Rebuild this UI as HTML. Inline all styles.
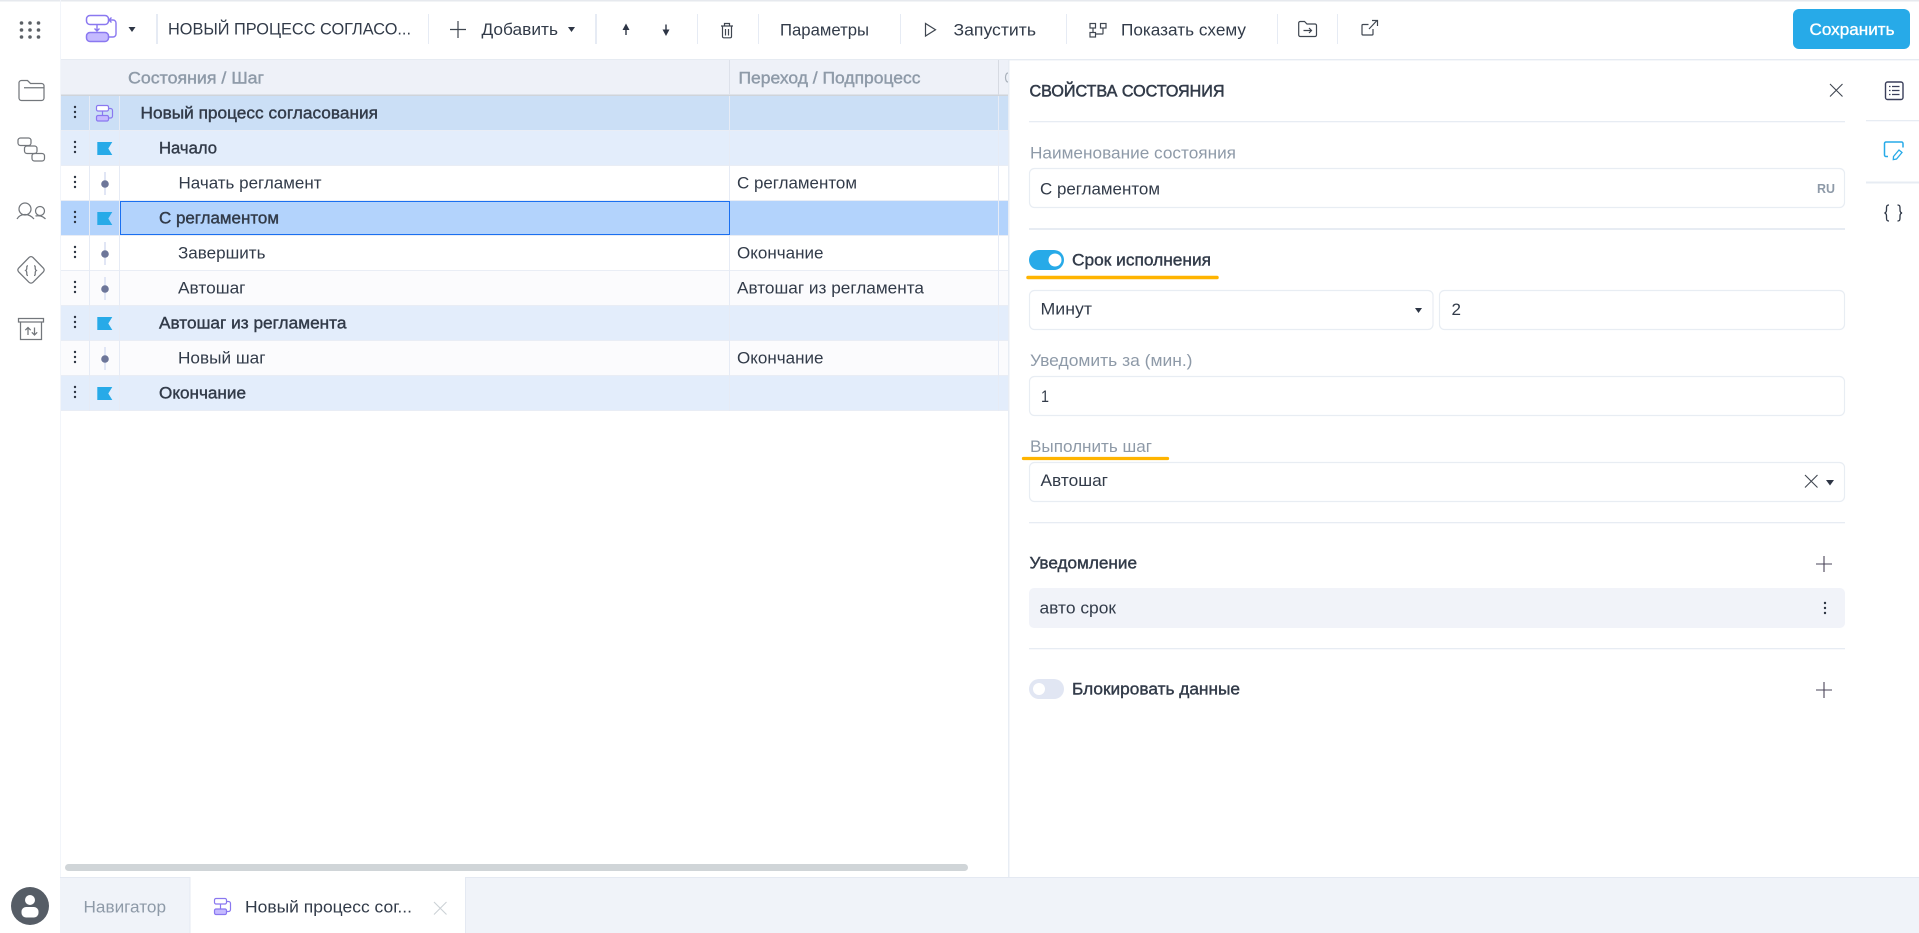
<!DOCTYPE html>
<html lang="ru">
<head>
<meta charset="utf-8">
<title>Новый процесс согласования</title>
<style>
html,body{margin:0;padding:0;background:#fff;width:1919px;height:933px;overflow:hidden}
svg{display:block;position:absolute;left:0;top:0}
text{font-family:"Liberation Sans","Noto Sans CJK SC",sans-serif;font-size:17px;fill:#323b49}
.m{stroke:#323b49;stroke-width:.4px}
.g{fill:#8e9aa8}
.gm{fill:#8e9aa8;stroke:#8e9aa8;stroke-width:.4px}
.w{fill:#fff;stroke:#fff;stroke-width:.35px}
.ic{fill:none;stroke:#73777c;stroke-width:1.250}
.tb{fill:none;stroke:#3f4650;stroke-width:1.200}
.box{fill:#fff;stroke:#e8edf3;stroke-width:1.200}
.div{fill:#e7ecf3}
.vl{stroke:#e6ebf5;stroke-width:1}
.hl{stroke:#e9edf5;stroke-width:1}
.dots{fill:#2c3442}
.car{fill:#2d3545}
.step{fill:#6d7699}
.stl{stroke:#e1e6f5;stroke-width:2}
.fl{fill:#27aae8}
</style>
</head>
<body>
<svg width="1919" height="933" viewBox="0 0 1919 933" xmlns="http://www.w3.org/2000/svg">
<defs>
<g id="d3"><circle cx="0" cy="-5" r="1.200"/><circle cx="0" cy="0" r="1.200"/><circle cx="0" cy="5" r="1.200"/></g>
<path id="flag" d="M0 0H15L11 6.500L15 13H0Z"/>
<g id="stp"><line class="stl" x1="0" y1="-11" x2="0" y2="12"/><circle class="step" cx="0" cy="1" r="3.800"/></g>
</defs>

<!-- base -->
<rect x="0" y="0" width="1919" height="1.500" fill="#e6e9ee"/>
<rect x="60" y="59" width="1859" height="1.400" fill="#e6ebf2"/>
<rect x="60" y="0" width="1" height="877" fill="#f2f5fa"/>

<!-- left sidebar icons -->
<g fill="#5c6166">
<circle cx="21.500" cy="23" r="1.800"/><circle cx="30" cy="23" r="1.800"/><circle cx="38.500" cy="23" r="1.800"/>
<circle cx="21.500" cy="30" r="1.800"/><circle cx="30" cy="30" r="1.800"/><circle cx="38.500" cy="30" r="1.800"/>
<circle cx="21.500" cy="37" r="1.800"/><circle cx="30" cy="37" r="1.800"/><circle cx="38.500" cy="37" r="1.800"/>
</g>
<path class="ic" d="M19 83a2.500 2.500 0 0 1 2.500-2.500h6l3 3h11a2.500 2.500 0 0 1 2.500 2.500v12a2.500 2.500 0 0 1-2.500 2.500h-20a2.500 2.500 0 0 1-2.500-2.500zM24 87.700h19.500"/>
<rect class="ic" x="18" y="138" width="13" height="7.500" rx="2.500"/>
<rect class="ic" x="24.500" y="146" width="12.500" height="7.500" rx="2.500"/>
<rect class="ic" x="32" y="153.500" width="12.500" height="7.500" rx="2.500"/>
<circle class="ic" cx="25" cy="209" r="6"/>
<circle class="ic" cx="40" cy="211" r="4.500"/>
<path class="ic" d="M17 219c2-3.500 5-4.500 8-4.500s6 1 9 4.500M35.500 216c3-.8 7.500 0 10 3"/>
<path class="ic" d="M29 257.500Q31 255.700 33 257.500L43.300 268Q45 270 43.300 272L33 282.300Q31 284 29 282.300L18.700 272Q17 270 18.700 268Z"/>
<path class="ic" stroke-width="1.100" d="M28 265.700c-1.500 0-1.200 1.200-1.200 2.300s-.2 2-1.100 2.500c.9.500 1.100 1.400 1.100 2.500s-.3 2.500 1.200 2.500M34 265.700c1.500 0 1.200 1.200 1.200 2.300s.2 2 1.100 2.500c-.9.500-1.100 1.400-1.100 2.500s.3 2.500-1.200 2.500"/>
<rect class="ic" x="18.500" y="318.500" width="25" height="3.500"/>
<path class="ic" d="M20.500 322v17.500h21v-17.500"/>
<path class="ic" stroke-width="1.200" d="M28 335v-7.500m-2.700 2.700l2.700-2.700l2.700 2.700M34.500 327.500v7.500m-2.700-2.700l2.700 2.700l2.700-2.700"/>

<!-- avatar -->
<circle cx="30" cy="906" r="19" fill="#565d66"/>
<circle cx="30" cy="900" r="5" fill="#fff"/>
<rect x="21.500" y="907" width="17" height="10.500" rx="4.500" fill="#fff"/>

<!-- toolbar -->
<g>
<rect x="86.500" y="15.500" width="22" height="9" rx="3.500" fill="#fff" stroke="#8a78f0" stroke-width="1.500"/>
<rect x="86.500" y="32.500" width="22" height="9" rx="3.500" fill="#c5baff" stroke="#8a78f0" stroke-width="1.500"/>
<path d="M97 25v6m-2.500-2.500l2.500 2.500l2.500-2.500M108.500 37h4.500a3 3 0 0 0 3-3v-11a3 3 0 0 0-3-3h-4m2.500-2.500l-2.500 2.500l2.500 2.500" fill="none" stroke="#8a78f0" stroke-width="1.400"/>
</g>
<path class="car" d="M128.500 27h7l-3.500 5z"/>
<rect x="156" y="14" width="2" height="30" fill="#e6ebf4"/>
<text x="168" y="34.500" textLength="243" lengthAdjust="spacingAndGlyphs">НОВЫЙ ПРОЦЕСС СОГЛАСО...</text>
<rect x="428" y="14" width="1" height="30" fill="#e6ebf4"/>
<path class="tb" d="M458 21v17M450 29.500h16"/>
<text x="481.500" y="35" textLength="76.500" lengthAdjust="spacingAndGlyphs">Добавить</text>
<path class="car" d="M568 27h7l-3.500 5z"/>
<rect x="595" y="14" width="2" height="30" fill="#e6ebf4"/>
<path class="car" d="M626 23.500l3.500 6.500h-2.800v5h-1.400v-5h-2.800z"/>
<path class="car" d="M666 36l3.500-6.500h-2.800v-5h-1.400v5h-2.800z"/>
<rect x="697" y="14" width="1" height="30" fill="#e6ebf4"/>
<path class="tb" d="M721 26h12M724.500 26v-2.500h5v2.500M722.500 26v10.500a1.300 1.300 0 0 0 1.300 1.300h6.400a1.300 1.300 0 0 0 1.300-1.300V26M725.500 29v6.500M728.500 29v6.500"/>
<rect x="758" y="14" width="1" height="30" fill="#e6ebf4"/>
<text x="780" y="35.500" textLength="89" lengthAdjust="spacingAndGlyphs">Параметры</text>
<rect x="900" y="14" width="1" height="30" fill="#e6ebf4"/>
<path class="tb" d="M925.500 23.500v12.500l10-6.250z"/>
<text x="953.500" y="35.500" textLength="82.500" lengthAdjust="spacingAndGlyphs">Запустить</text>
<rect x="1066" y="14" width="1" height="30" fill="#e6ebf4"/>
<g class="tb" stroke-width="1.300">
<rect x="1090" y="23.500" width="5.500" height="4.500"/>
<rect x="1100.500" y="23.500" width="5.500" height="4.500"/>
<rect x="1090" y="32.500" width="5.500" height="4.500"/>
<path d="M1093 28v4.500M1103 28v5.500a.5.5 0 0 1-.5.5h-7"/>
</g>
<text x="1121" y="35.500" textLength="125" lengthAdjust="spacingAndGlyphs">Показать схему</text>
<rect x="1277" y="14" width="1" height="30" fill="#e6ebf4"/>
<path class="tb" d="M1298.700 23a1.500 1.500 0 0 1 1.500-1.500h4.300l2.500 2.500h8a1.500 1.500 0 0 1 1.500 1.500v9.500a1.500 1.500 0 0 1-1.500 1.500h-14.800a1.500 1.500 0 0 1-1.500-1.500zM1303.500 30.500h8m-2.500-2.500l2.500 2.500l-2.500 2.500"/>
<rect x="1337" y="14" width="1" height="30" fill="#e6ebf4"/>
<path class="tb" d="M1368.500 24.500h-5.500a1 1 0 0 0-1 1v8.500a1 1 0 0 0 1 1h9a1 1 0 0 0 1-1v-5M1369 29l8-8.500M1372 20.500h5.500v5.500"/>
<rect x="1793" y="9" width="117" height="40" rx="6" fill="#27aae8"/>
<text class="w" x="1809.500" y="35" textLength="85" lengthAdjust="spacingAndGlyphs">Сохранить</text>

<!-- table header -->
<rect x="61" y="60" width="947" height="35" fill="#eef1f8"/>
<rect x="61" y="94.500" width="947" height="1.500" fill="#cfd4da"/>
<rect x="729" y="60" width="1" height="35" fill="#dde1ea"/>
<rect x="998" y="60" width="1" height="35" fill="#d6dae2"/>
<text class="gm" x="128" y="83.500" textLength="136" lengthAdjust="spacingAndGlyphs">Состояния / Шаг</text>
<text class="gm" x="738.500" y="83.500" textLength="182" lengthAdjust="spacingAndGlyphs">Переход / Подпроцесс</text>
<path d="M1008 73c-1.500 0-2.500 2-2.500 4.500s1 4.500 2.500 4.500" fill="none" stroke="#aab2bc" stroke-width="1.200"/>

<!-- rows -->
<rect x="61" y="96" width="947" height="34.500" fill="#cbdff6"/>
<rect x="61" y="131" width="947" height="34.500" fill="#e3edfb"/>
<rect x="61" y="166" width="947" height="34.500" fill="#ffffff"/>
<rect x="61" y="201" width="947" height="34.500" fill="#b3d3fc"/>
<rect x="61" y="236" width="947" height="34.500" fill="#ffffff"/>
<rect x="61" y="271" width="947" height="34.500" fill="#fbfbfd"/>
<rect x="61" y="306" width="947" height="34.500" fill="#e3edfb"/>
<rect x="61" y="341" width="947" height="34.500" fill="#fbfbfd"/>
<rect x="61" y="376" width="947" height="34.500" fill="#e3edfb"/>
<g class="hl">
<line x1="61" y1="130.500" x2="1008" y2="130.500"/>
<line x1="61" y1="165.500" x2="1008" y2="165.500"/>
<line x1="61" y1="200.500" x2="1008" y2="200.500"/>
<line x1="61" y1="235.500" x2="1008" y2="235.500"/>
<line x1="61" y1="270.500" x2="1008" y2="270.500"/>
<line x1="61" y1="305.500" x2="1008" y2="305.500"/>
<line x1="61" y1="340.500" x2="1008" y2="340.500"/>
<line x1="61" y1="375.500" x2="1008" y2="375.500"/>
<line x1="61" y1="410.500" x2="1008" y2="410.500"/>
</g>
<g class="vl">
<line x1="89.500" y1="96" x2="89.500" y2="411"/>
<line x1="119.500" y1="96" x2="119.500" y2="411"/>
<line x1="729.500" y1="96" x2="729.500" y2="411"/>
<line x1="998.500" y1="96" x2="998.500" y2="411"/>
</g>
<rect x="120.500" y="201.500" width="609" height="33" fill="none" stroke="#1a6ff0" stroke-width="1"/>

<g class="dots">
<use href="#d3" x="75" y="112"/><use href="#d3" x="75" y="147"/><use href="#d3" x="75" y="182"/>
<use href="#d3" x="75" y="217"/><use href="#d3" x="75" y="252"/><use href="#d3" x="75" y="287"/>
<use href="#d3" x="75" y="322"/><use href="#d3" x="75" y="357"/><use href="#d3" x="75" y="392"/>
</g>
<!-- row icons -->
<rect x="96.500" y="105.500" width="12" height="5.500" rx="1.500" fill="#fff" stroke="#8a78f0" stroke-width="1.200"/>
<rect x="96.500" y="115.500" width="12" height="5.500" rx="1.500" fill="#c5baff" stroke="#8a78f0" stroke-width="1.200"/>
<path d="M102.500 111v4.500M108.500 118h2a2 2 0 0 0 2-2v-5.500a2 2 0 0 0-2-2h-2" fill="none" stroke="#8a78f0" stroke-width="1.200"/>
<use class="fl" href="#flag" x="97.300" y="142"/>
<use class="fl" href="#flag" x="97.300" y="212"/>
<use class="fl" href="#flag" x="97.300" y="317"/>
<use class="fl" href="#flag" x="97.300" y="387"/>
<use href="#stp" x="105" y="183"/>
<use href="#stp" x="105" y="253"/>
<use href="#stp" x="105" y="288"/>
<use href="#stp" x="105" y="358"/>

<text class="m" x="140.500" y="118.500" textLength="237.500" lengthAdjust="spacingAndGlyphs">Новый процесс согласования</text>
<text class="m" x="159" y="153.500" textLength="58" lengthAdjust="spacingAndGlyphs">Начало</text>
<text x="178.500" y="188.500" textLength="143" lengthAdjust="spacingAndGlyphs">Начать регламент</text>
<text class="m" x="159" y="223.500" textLength="120" lengthAdjust="spacingAndGlyphs">С регламентом</text>
<text x="178" y="258.500" textLength="87.500" lengthAdjust="spacingAndGlyphs">Завершить</text>
<text x="178" y="293.500" textLength="67.500" lengthAdjust="spacingAndGlyphs">Автошаг</text>
<text class="m" x="159" y="328.500" textLength="187.500" lengthAdjust="spacingAndGlyphs">Автошаг из регламента</text>
<text x="178" y="363.500" textLength="87.500" lengthAdjust="spacingAndGlyphs">Новый шаг</text>
<text class="m" x="159" y="398.500" textLength="87" lengthAdjust="spacingAndGlyphs">Окончание</text>

<text x="737" y="188.500" textLength="120" lengthAdjust="spacingAndGlyphs">С регламентом</text>
<text x="737" y="258.500" textLength="86.500" lengthAdjust="spacingAndGlyphs">Окончание</text>
<text x="737" y="293.500" textLength="187" lengthAdjust="spacingAndGlyphs">Автошаг из регламента</text>
<text x="737" y="363.500" textLength="86.500" lengthAdjust="spacingAndGlyphs">Окончание</text>

<!-- scrollbar -->
<rect x="65" y="864" width="903" height="7" rx="3.500" fill="#d0d5d8"/>

<!-- panel -->
<rect x="1008" y="60" width="1.500" height="817" fill="#e8edf4"/>
<text class="m" x="1029.500" y="96.500" textLength="195" lengthAdjust="spacingAndGlyphs" style="stroke-width:.55px">СВОЙСТВА СОСТОЯНИЯ</text>
<path d="M1830 84l12.500 12.500M1842.500 84l-12.500 12.500" fill="none" stroke="#3f4650" stroke-width="1.100"/>
<rect class="div" x="1029" y="121" width="816" height="1.300"/>

<text class="g" x="1030" y="158.500" textLength="206" lengthAdjust="spacingAndGlyphs">Наименование состояния</text>
<rect class="box" x="1029.500" y="168.500" width="815" height="39" rx="5"/>
<text x="1040" y="194.500" textLength="120" lengthAdjust="spacingAndGlyphs">С регламентом</text>
<text x="1817" y="193" textLength="18" lengthAdjust="spacingAndGlyphs" style="font-size:13px;font-weight:bold;fill:#8e9aa8">RU</text>
<rect class="div" x="1029" y="228" width="816" height="2"/>

<rect x="1029" y="250" width="35" height="20" rx="10" fill="#27aae8"/>
<circle cx="1055" cy="260" r="6.500" fill="#fff"/>
<text class="m" x="1072" y="265.500" textLength="139" lengthAdjust="spacingAndGlyphs">Срок исполнения</text>
<path d="M1028 277.500H1217" fill="none" stroke="#ffb400" stroke-width="3.500" stroke-linecap="round"/>

<rect class="box" x="1029.500" y="290.500" width="403.500" height="39" rx="5"/>
<text x="1040.500" y="314.500" textLength="51.500" lengthAdjust="spacingAndGlyphs">Минут</text>
<path class="car" d="M1415 308h7l-3.500 5z"/>
<rect class="box" x="1439.500" y="290.500" width="405" height="39" rx="5"/>
<text x="1451.500" y="315" textLength="9.500" lengthAdjust="spacingAndGlyphs">2</text>

<text class="g" x="1030" y="366" textLength="162.500" lengthAdjust="spacingAndGlyphs">Уведомить за (мин.)</text>
<rect class="box" x="1029.500" y="376.500" width="815" height="39" rx="5"/>
<text x="1041" y="402" textLength="8" lengthAdjust="spacingAndGlyphs">1</text>

<text class="g" x="1030" y="452" textLength="122" lengthAdjust="spacingAndGlyphs">Выполнить шаг</text>
<path d="M1023.500 458.500H1167.500" fill="none" stroke="#ffb400" stroke-width="3.300" stroke-linecap="round"/>
<rect class="box" x="1029.500" y="462.500" width="815" height="39" rx="5"/>
<text x="1040.500" y="486" textLength="67.500" lengthAdjust="spacingAndGlyphs">Автошаг</text>
<path d="M1805 475l12.500 12.500M1817.500 475l-12.500 12.500" fill="none" stroke="#3f4650" stroke-width="1.100"/>
<path class="car" d="M1826 480h8l-4 5.500z"/>

<rect class="div" x="1029" y="522" width="816" height="1.300"/>
<text class="m" x="1029.500" y="568.500" textLength="107.500" lengthAdjust="spacingAndGlyphs">Уведомление</text>
<path d="M1824 556v16M1816 564h16" fill="none" stroke="#4a4458" stroke-width="1.100"/>
<rect x="1029" y="588" width="816" height="40" rx="5" fill="#f1f3f9"/>
<text x="1039.500" y="613.500" textLength="76.500" lengthAdjust="spacingAndGlyphs">авто срок</text>
<g class="dots"><use href="#d3" x="1825" y="608"/></g>
<rect class="div" x="1029" y="648" width="816" height="1.300"/>

<rect x="1029" y="679" width="35" height="20" rx="10" fill="#e1e6f3"/>
<circle cx="1039" cy="689" r="6" fill="#fff"/>
<text class="m" x="1072" y="694.500" textLength="168" lengthAdjust="spacingAndGlyphs">Блокировать данные</text>
<path d="M1824 682v16M1816 690h16" fill="none" stroke="#4a4458" stroke-width="1.100"/>

<!-- right rail -->
<rect x="1885.500" y="82" width="17.500" height="17.500" rx="2" fill="none" stroke="#3a3f5a" stroke-width="1.400"/>
<path d="M1889 86.500h1.500M1892 86.500h7.500M1889 90.500h1.500M1892 90.500h7.500M1889 94.500h1.500M1892 94.500h7.500" fill="none" stroke="#3a3f5a" stroke-width="1.200"/>
<rect x="1866" y="120" width="53" height="1.300" fill="#e7ecf3"/>
<path d="M1888 156.500h-2a1.500 1.500 0 0 1-1.500-1.500v-11.500a1.500 1.500 0 0 1 1.500-1.500h15.500a1.500 1.500 0 0 1 1.500 1.500v4" fill="none" stroke="#27aae8" stroke-width="1.500"/>
<path d="M1893.500 156.500l5.500-6.500l3 2.500l-5.500 6.500l-3.200.6z" fill="none" stroke="#27aae8" stroke-width="1.300"/>
<rect x="1866" y="181.500" width="53" height="2" fill="#e7ecf3"/>
<path d="M1889 205c-2.500 0-2.500 1.500-2.500 3.500s.2 4-2 4.500c2.200.5 2 2.500 2 4.500s0 3.500 2.500 3.500M1897.500 205c2.500 0 2.500 1.500 2.500 3.500s-.2 4 2 4.500c-2.200.5-2 2.500-2 4.500s0 3.500-2.500 3.500" fill="none" stroke="#2f3847" stroke-width="1.300"/>

<!-- bottom tabs -->
<rect x="60" y="877" width="1859" height="56" fill="#f0f3f9"/>
<rect x="60" y="877" width="1859" height="1" fill="#e4e9f2"/>
<rect x="190" y="877" width="275" height="56" fill="#fff"/>
<rect x="189.500" y="877" width="1" height="56" fill="#e4e9f2"/>
<rect x="465" y="877" width="1" height="56" fill="#e4e9f2"/>
<text class="g" x="83.500" y="912.500" textLength="82.500" lengthAdjust="spacingAndGlyphs">Навигатор</text>
<rect x="214.500" y="898.500" width="12" height="5.500" rx="1.500" fill="#fff" stroke="#8a78f0" stroke-width="1.200"/>
<rect x="214.500" y="909" width="12" height="5.500" rx="1.500" fill="#c5baff" stroke="#8a78f0" stroke-width="1.200"/>
<path d="M220.500 904v5M226.500 911.500h2a2 2 0 0 0 2-2v-6a2 2 0 0 0-2-2h-2" fill="none" stroke="#8a78f0" stroke-width="1.200"/>
<text x="245" y="912.500" textLength="167" lengthAdjust="spacingAndGlyphs">Новый процесс сог...</text>
<path d="M434 902l12.500 12.500M446.500 902l-12.500 12.500" fill="none" stroke="#ccd1d6" stroke-width="1.100"/>
</svg>
</body>
</html>
